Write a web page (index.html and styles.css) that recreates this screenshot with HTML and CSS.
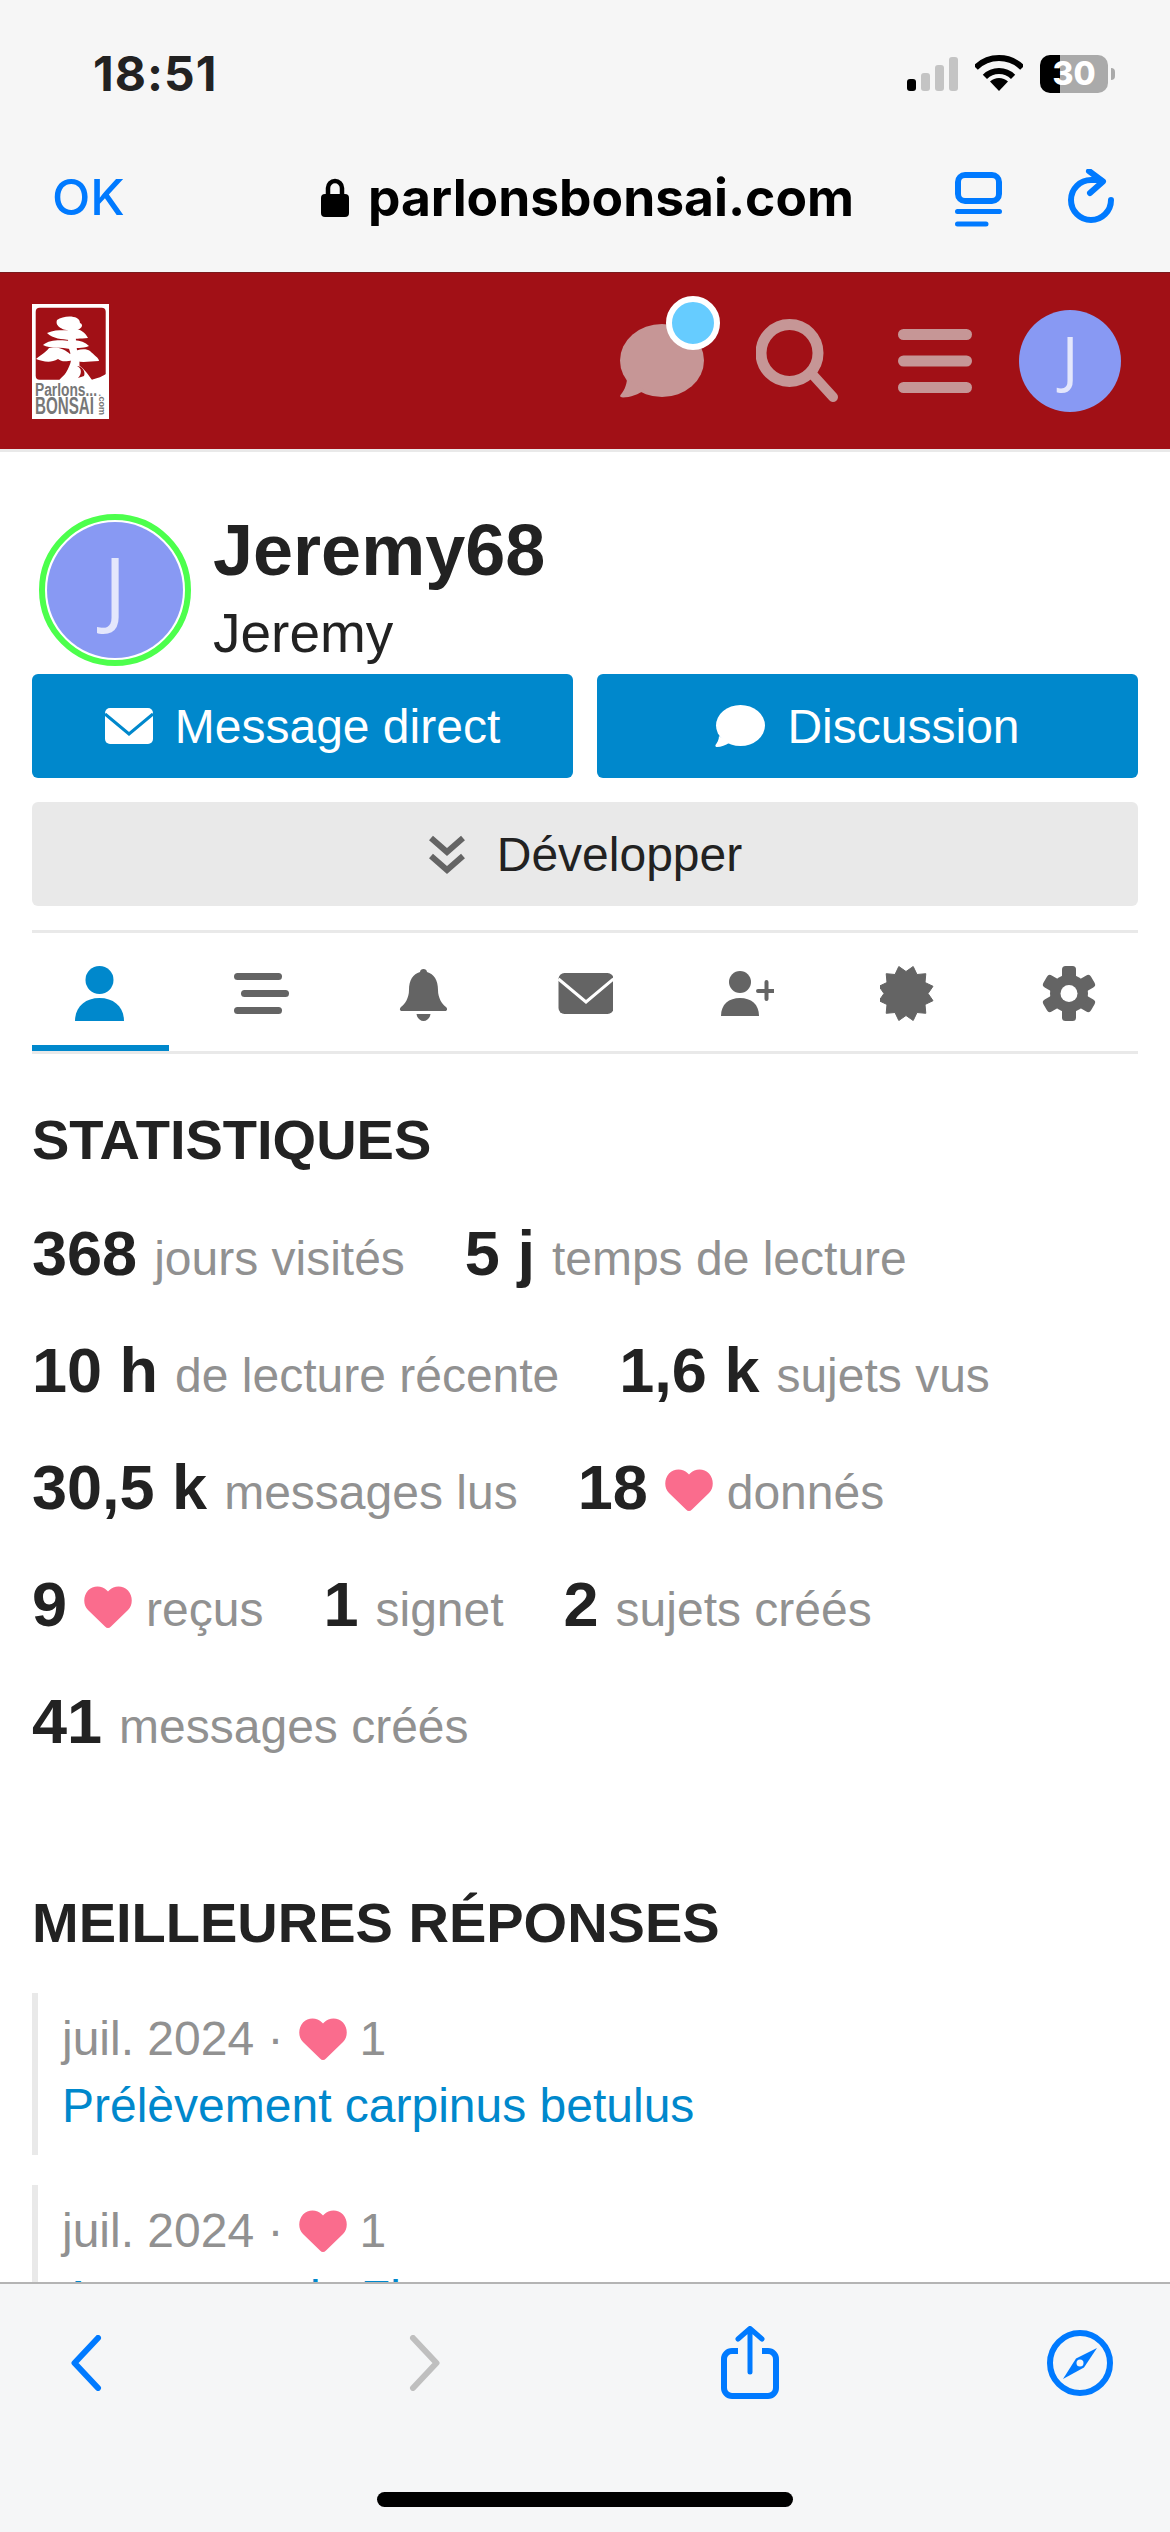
FILE: index.html
```html
<!DOCTYPE html>
<html lang="fr">
<head>
<meta charset="utf-8">
<title>Jeremy68 - parlonsbonsai.com</title>
<link rel="stylesheet" href="styles.css">
</head>
<body>
<div class="phone">

<!-- barre iOS + safari -->
<div class="browser-top">
	<div class="status-bar">
		<span class="clock">18:51</span>
		<div class="status-icons">
			<svg class="signal" width="51" height="34" viewBox="0 0 51 34">
				<rect x="0" y="22" width="9" height="12" rx="3" fill="#000"/>
				<rect x="14" y="16" width="9" height="18" rx="3" fill="#c4c4c4"/>
				<rect x="28" y="8" width="9" height="26" rx="3" fill="#c4c4c4"/>
				<rect x="42" y="0" width="9" height="34" rx="3" fill="#c4c4c4"/>
			</svg>
			<svg class="wifi" width="48" height="36" viewBox="0 0 48 36">
				<path d="M.7 12.7A33 33 0 0 1 47.3 12.7" fill="none" stroke="#000" stroke-width="6"/>
				<path d="M9.9 21.9A20 20 0 0 1 38.1 21.9" fill="none" stroke="#000" stroke-width="6"/>
				<path d="M24 36L15 26.500A13 13 0 0 1 33 26.500Z" fill="#000"/>
			</svg>
			<div class="battery">30</div>
			<div class="battery-cap"></div>
		</div>
	</div>
	<div class="address-bar">
		<span class="ok-link">OK</span>
		<div class="url">
			<svg class="lock" width="28" height="39" viewBox="0 0 28 39">
				<path d="M7 18V10a7 7 0 0 1 14 0v8" fill="none" stroke="#000" stroke-width="4.500"/>
				<rect x="0" y="16" width="28" height="23" rx="4" fill="#000"/>
			</svg>
			<span>parlonsbonsai.com</span>
		</div>
		<svg class="tabs-icon" width="47" height="55" viewBox="0 0 47 55">
			<rect x="3" y="3" width="41" height="26" rx="7" fill="none" stroke="#007aff" stroke-width="6"/>
			<path d="M2.500 39.500H44.500M2.500 52H31" fill="none" stroke="#007aff" stroke-width="5" stroke-linecap="round"/>
		</svg>
		<svg class="reload-icon" width="48" height="56" viewBox="0 0 48 56">
			<path d="M45 31A20 20 0 1 1 25 11H34" fill="none" stroke="#007aff" stroke-width="6" stroke-linecap="round"/>
			<path d="M23 2L37 12.500L24 24" fill="none" stroke="#007aff" stroke-width="6" stroke-linecap="round" stroke-linejoin="round"/>
		</svg>
	</div>
</div>

<!-- entete du site -->
<header class="site-header">
	<svg class="logo" width="77" height="115" viewBox="0 0 77 115">
		<rect width="77" height="115" fill="#fff"/>
		<rect x="3.700" y="3.700" width="70" height="72" rx="4" fill="#a11016"/>
		<path d="M24 80C30 72 38 66 44 60C50 62 56 70 60 76C64 74 68 74 74 70V84H24Z" fill="#fff"/>
		<path d="M25 16C32 11 48 11 48 19C53 21 48 27 42 26C36 28 22 24 25 16Z" fill="#fff"/>
		<path d="M15 29C24 25 32 27 38 26C46 23 53 28 56 34C48 35 42 34 38 36C30 35 21 35 15 29Z" fill="#fff"/>
		<path d="M11 41C18 35 30 36 38 37C44 35 52 37 57 42C50 45 44 43 38 45C30 43 18 45 11 41Z" fill="#fff"/>
		<path d="M4 55C10 50 14 48 17 44C26 42 34 46 38 50C44 45 54 44 58 47C62 51 67 54 67 57C58 57 52 59 44 57C38 55 32 60 26 55C18 60 10 57 4 55Z" fill="#fff"/>
		<path d="M34 14C38 26 34 38 38 48C41 56 38 62 32 72L44 74C50 62 47 54 45 46C43 36 44 26 44 16Z" fill="#fff"/>
		<path d="M45 62C50 64 50 70 46 74L52 72C54 68 50 62 45 62Z" fill="#a11016"/>
		<text class="logo-parlons" x="3" y="92" textLength="62" lengthAdjust="spacingAndGlyphs">Parlons...</text>
		<text class="logo-bonsai" x="3" y="110" textLength="59" lengthAdjust="spacingAndGlyphs">BONSAI</text>
		<text class="logo-com" transform="translate(67 90) rotate(90)" textLength="21" lengthAdjust="spacingAndGlyphs">.com</text>
	</svg>
	<div class="header-icons">
		<div class="chat-icon">
			<svg width="84" height="74" viewBox="0 0 84 74">
				<ellipse cx="42" cy="36.500" rx="42" ry="36.500" fill="#c69696"/>
				<path d="M7 54C7 62 3 68 .5 71C-.5 73 1 73.500 3 73.500C10 73.500 19 70 25 66Z" fill="#c69696"/>
			</svg>
			<span class="chat-badge"></span>
		</div>
		<svg class="search-icon" width="84" height="84" viewBox="0 0 84 84">
			<circle cx="33.500" cy="34" r="28.500" fill="none" stroke="#c69696" stroke-width="11"/>
			<path d="M57 56L77 78" fill="none" stroke="#c69696" stroke-width="10" stroke-linecap="round"/>
		</svg>
		<svg class="menu-icon" width="74" height="64" viewBox="0 0 74 64">
			<rect y="0" width="74" height="11" rx="5.500" fill="#c69696"/>
			<rect y="26.500" width="74" height="11" rx="5.500" fill="#c69696"/>
			<rect y="53" width="74" height="11" rx="5.500" fill="#c69696"/>
		</svg>
		<div class="avatar avatar-small">J</div>
	</div>
</header>

<main class="content">

	<div class="user-card">
		<div class="avatar-ring"><div class="avatar avatar-big">J</div></div>
		<div class="user-names">
			<h1 class="username">Jeremy68</h1>
			<div class="fullname">Jeremy</div>
		</div>
	</div>

	<div class="user-buttons">
		<button class="btn btn-primary">
			<svg width="48" height="36" viewBox="0 0 48 36">
				<rect width="48" height="36" rx="5" fill="#fff"/>
				<path d="M0 6L24 26L48 6" fill="none" stroke="#0088cc" stroke-width="3"/>
			</svg>
			Message direct
		</button>
		<button class="btn btn-primary">
			<svg class="btn-bubble" width="50" height="42" viewBox="0 0 50 42">
				<ellipse cx="25.500" cy="20.500" rx="24.500" ry="20.500" fill="#fff"/>
				<path d="M4 31C4 35 2 38 .5 40C0 41.500 1 42 2 42C6 42 11 40 14 38Z" fill="#fff"/>
			</svg>
			Discussion
		</button>
	</div>
	<button class="btn btn-expand">
		<svg width="38" height="39" viewBox="0 0 38 39">
			<path d="M3 3L19 17L35 3M3 21L19 35L35 21" fill="none" stroke="#646464" stroke-width="6"/>
		</svg>
		Développer
	</button>

	<nav class="user-tabs">
		<a class="tab active">
			<svg width="56" height="55" viewBox="0 0 56 55">
				<circle cx="26.500" cy="14" r="14" fill="#0088cc"/>
				<path d="M2 55C2 41 12 32 26.500 32C41 32 51 41 51 55Z" fill="#0088cc"/>
			</svg>
		</a>
		<a class="tab">
			<svg width="56" height="55" viewBox="0 0 56 55">
				<rect x="0" y="7" width="48" height="7" rx="3.500" fill="#646464"/>
				<rect x="7" y="24" width="48" height="7" rx="3.500" fill="#646464"/>
				<rect x="0" y="41" width="48" height="7" rx="3.500" fill="#646464"/>
			</svg>
		</a>
		<a class="tab">
			<svg width="56" height="55" viewBox="0 0 56 55">
				<path d="M24 6C24 2 31 2 31 6C38 8 42 14 42 24C42 32 46 38 50 41C52 43 51 45 49 45H6C4 45 3 43 5 41C9 38 13 32 13 24C13 14 17 8 24 6Z" fill="#646464"/>
				<path d="M20.500 48H34.500C34 52 31 55 27.500 55C24 55 21 52 20.500 48Z" fill="#646464"/>
			</svg>
		</a>
		<a class="tab">
			<svg width="56" height="55" viewBox="-1.500 0 56 55">
				<rect x="0" y="7" width="55" height="41" rx="6" fill="#646464"/>
				<path d="M0 13L27.500 36L55 13" fill="none" stroke="#fff" stroke-width="3"/>
			</svg>
		</a>
		<a class="tab">
			<svg width="56" height="55" viewBox="-3 0 56 55">
				<circle cx="19" cy="16" r="11" fill="#646464"/>
				<path d="M0 50C0 38 8 32 19 32C30 32 38 38 38 50Z" fill="#646464"/>
				<path d="M37 25H54M45.500 16V33" fill="none" stroke="#646464" stroke-width="4" stroke-linecap="round"/>
			</svg>
		</a>
		<a class="tab">
			<svg width="56" height="55" viewBox="-26 -27.500 56 55">
				<path d="M0 -22L7.200 -27L11 -19L19.800 -19.800L19 -11L27 -7.200L22 0L27 7.200L19 11L19.800 19.800L11 19L7.200 27L0 22L-7.200 27L-11 19L-19.800 19.800L-19 11L-27 7.200L-22 0L-27 -7.200L-19 -11L-19.800 -19.800L-11 -19L-7.200 -27Z" fill="#646464" stroke="#646464" stroke-linejoin="round"/>
			</svg>
		</a>
		<a class="tab">
			<svg width="56" height="55" viewBox="-28 -27.500 56 55">
				<rect x="-7" y="-27.500" width="14" height="55" rx="3.500" fill="#646464"/>
				<rect x="-7" y="-27.500" width="14" height="55" rx="3.500" fill="#646464" transform="rotate(60)"/>
				<rect x="-7" y="-27.500" width="14" height="55" rx="3.500" fill="#646464" transform="rotate(120)"/>
				<circle r="19" fill="#646464"/>
				<circle r="8.500" fill="#fff"/>
			</svg>
		</a>
	</nav>

	<h2 class="section-title stats-title">STATISTIQUES</h2>
	<ul class="stats">
		<li class="stat"><b>368</b><span>jours visités</span></li>
		<li class="stat"><b>5 j</b><span>temps de lecture</span></li>
		<li class="stat"><b>10 h</b><span>de lecture récente</span></li>
		<li class="stat"><b>1,6 k</b><span>sujets vus</span></li>
		<li class="stat"><b>30,5 k</b><span>messages lus</span></li>
		<li class="stat"><b>18</b><svg class="heart stat-heart" viewBox="0 0 48 42"><use href="#heart"/></svg><span>donnés</span></li>
		<li class="stat"><b>9</b><svg class="heart stat-heart" viewBox="0 0 48 42"><use href="#heart"/></svg><span>reçus</span></li>
		<li class="stat"><b>1</b><span>signet</span></li>
		<li class="stat"><b>2</b><span>sujets créés</span></li>
		<li class="stat"><b>41</b><span>messages créés</span></li>
	</ul>

	<h2 class="section-title best-title">MEILLEURES RÉPONSES</h2>
	<div class="reply">
		<div class="reply-meta">juil. 2024 ·<svg class="heart" viewBox="0 0 48 42"><use href="#heart"/></svg>1</div>
		<a class="reply-link">Prélèvement carpinus betulus</a>
	</div>
	<div class="reply">
		<div class="reply-meta">juil. 2024 ·<svg class="heart" viewBox="0 0 48 42"><use href="#heart"/></svg>1</div>
		<a class="reply-link">Arrosages de Ficus</a>
	</div>
</main>

<!-- barre du bas safari -->
<footer class="browser-bottom">
	<div class="nav-row">
		<svg class="nav-back" width="31" height="56" viewBox="0 0 31 56">
			<path d="M27 3L3.500 28L27 53" fill="none" stroke="#007aff" stroke-width="6" stroke-linecap="round" stroke-linejoin="round"/>
		</svg>
		<svg class="nav-forward" width="31" height="56" viewBox="0 0 31 56">
			<path d="M4 3L27.500 28L4 53" fill="none" stroke="#bfbfbf" stroke-width="6" stroke-linecap="round" stroke-linejoin="round"/>
		</svg>
		<svg class="nav-share" width="58" height="73" viewBox="0 0 58 73">
			<path d="M17 25H11A8 8 0 0 0 3 33V62A8 8 0 0 0 11 70H47A8 8 0 0 0 55 62V33A8 8 0 0 0 47 25H41" fill="none" stroke="#007aff" stroke-width="6"/>
			<path d="M29 3V46M17 13L29 2.500L41 13" fill="none" stroke="#007aff" stroke-width="5" stroke-linecap="round" stroke-linejoin="round"/>
		</svg>
		<svg class="nav-compass" width="66" height="66" viewBox="0 0 66 66">
			<circle cx="33" cy="33" r="30" fill="none" stroke="#007aff" stroke-width="6"/>
			<path d="M50 18L37 37.400L16 49L29 28.600Z" fill="#007aff"/>
			<circle cx="33" cy="33" r="3.500" fill="#f5f6f7"/>
		</svg>
	</div>
	<div class="home-bar"></div>
</footer>

</div>

<svg class="defs" width="0" height="0">
	<symbol id="heart" viewBox="0 0 48 42">
		<path d="M24 42C23 42 22 41.500 21 40.500L4 24C-1 19 -1 10 4 4.500C9 -1 18 -1 23 4.500L24 5.500L25 4.500C30 -1 39 -1 44 4.500C49 10 49 19 44 24L27 40.500C26 41.500 25 42 24 42Z" fill="#fa6c8d"/>
	</symbol>
</svg>
</body>
</html>
```

FILE: styles.css
```css
* {
	box-sizing: border-box;
}

html, body {
	margin: 0;
	padding: 0;
	background: #fff;
}

body {
	font-family: "Liberation Sans", Arial, sans-serif;
	color: #222;
}

.phone {
	width: 1170px;
	height: 2532px;
	display: flex;
	flex-direction: column;
	overflow: hidden;
}

.defs {
	display: block;
}

svg {
	display: block;
	flex: none;
}

/* haut navigateur */
.browser-top {
	height: 273px;
	background: #f6f6f6;
	border-bottom: 1px solid #7a1a1d;
}

.status-bar {
	height: 142px;
	padding: 47px 55px 0 93px;
	display: flex;
	justify-content: space-between;
}

.clock {
	font-family: Inter, sans-serif;
	font-weight: 700;
	font-size: 48px;
	letter-spacing: 1px;
	line-height: 54px;
}

.status-icons {
	display: flex;
	align-items: flex-start;
	padding-top: 8px;
}

.signal {
	margin-top: 2px;
}

.wifi {
	margin-left: 17px;
}

.battery {
	width: 68px;
	height: 38px;
	margin-left: 17px;
	border-radius: 10px;
	background: linear-gradient(to right, #000 20px, #aaa 20px);
	color: #fff;
	font-family: Inter, sans-serif;
	font-weight: 800;
	font-size: 32px;
	line-height: 38px;
	text-align: center;
}

.battery-cap {
	width: 4px;
	height: 12px;
	margin: 13px 0 0 3px;
	background: #aaa;
	border-radius: 0 4px 4px 0;
}

.address-bar {
	display: flex;
	align-items: center;
	padding: 0 0 0 52px;
	height: 110px;
}

.ok-link {
	font-family: Inter, sans-serif;
	font-weight: 500;
	font-size: 50px;
	color: #007aff;
	width: 269px;
}

.url {
	display: flex;
	align-items: center;
	gap: 19px;
	font-family: Inter, sans-serif;
	font-weight: 700;
	font-size: 51.5px;
	color: #000;
	width: 634px;
}

.tabs-icon {
	margin-top: 4px;
}

.reload-icon {
	margin-left: 64px;
}

/* entete rouge */
.site-header {
	height: 176px;
	background: #a11016;
	padding: 0 49px 0 32px;
	display: flex;
	align-items: center;
	justify-content: space-between;
}

.logo-parlons {
	font-size: 18px;
	font-weight: bold;
	fill: #777;
}

.logo-bonsai {
	font-size: 23px;
	font-weight: bold;
	fill: #777;
}

.logo-com {
	font-size: 9px;
	font-weight: bold;
	fill: #777;
}

.header-icons {
	display: flex;
	align-items: center;
}

.chat-icon {
	position: relative;
}

.chat-badge {
	position: absolute;
	top: -28px;
	left: 46px;
	width: 54px;
	height: 54px;
	border-radius: 50%;
	background: #6cf;
	border: 6px solid #fff;
}

.search-icon {
	margin-left: 52px;
}

.menu-icon {
	margin-left: 58px;
}

.avatar {
	border-radius: 50%;
	background: #8899f3;
	color: #e4e7fc;
	font-family: "Open Sans", sans-serif;
	text-align: center;
}

.avatar-small {
	width: 102px;
	height: 102px;
	margin-left: 47px;
	font-size: 62px;
	line-height: 96px;
}

/* contenu */
.content {
	flex: 1;
	min-height: 0;
	overflow: hidden;
	padding: 0 32px;
	border-top: 3px solid #e9e9e9;
}

.user-card {
	display: flex;
	padding: 62px 0 0 7px;
	height: 222px;
}

.avatar-ring {
	width: 152px;
	height: 152px;
	padding: 2px;
	border-radius: 50%;
	border: 6px solid #4cff4c;
	flex: none;
}

.avatar-big {
	width: 136px;
	height: 136px;
	font-size: 84px;
	line-height: 128px;
}

.user-names {
	margin-left: 22px;
}

.username {
	margin: 0;
	font-size: 72px;
	line-height: 72px;
	font-weight: bold;
}

.fullname {
	margin-top: 17px;
	font-size: 55px;
	line-height: 60px;
}

.user-buttons {
	display: flex;
	gap: 24px;
}

.btn {
	width: 100%;
	height: 104px;
	border: 0;
	border-radius: 6px;
	font-family: "Liberation Sans", Arial, sans-serif;
	font-size: 48px;
	display: flex;
	align-items: center;
	justify-content: center;
	gap: 22px;
}

.btn-primary {
	background: #0088cc;
	color: #fff;
}

.btn-expand {
	margin-top: 24px;
	background: #e9e9e9;
	color: #222;
	gap: 31px;
}

.user-tabs {
	margin-top: 24px;
	display: flex;
	gap: 24px;
	border-top: 3px solid #e9e9e9;
	border-bottom: 3px solid #e9e9e9;
}

.tab {
	flex: 1;
	padding: 33px 0 24px;
	border-bottom: 6px solid transparent;
	display: flex;
	justify-content: center;
}

.tab.active {
	border-bottom-color: #0088cc;
}

.section-title {
	margin: 0;
	font-size: 56px;
	line-height: 64px;
	font-weight: bold;
}

.stats-title {
	margin-top: 54px;
}

.stats {
	list-style: none;
	margin: 41px 0 0;
	padding: 0;
	display: flex;
	flex-wrap: wrap;
	column-gap: 60px;
	row-gap: 37px;
}

.stat {
	display: flex;
	align-items: baseline;
	gap: 17px;
	height: 80px;
	font-size: 48px;
	line-height: 80px;
	color: #919191;
}

.stat b {
	font-size: 63px;
	color: #222;
}

.heart {
	width: 48px;
	height: 42px;
}

.stat-heart {
	align-self: center;
	margin: 6px -3px 0 0;
}

.best-title {
	margin-top: 130px;
}

.reply {
	margin-top: 30px;
	height: 162px;
	padding: 14px 0 0 24px;
	border-left: 6px solid #e9e9e9;
}

.best-title + .reply {
	margin-top: 38px;
}

.reply-meta {
	display: flex;
	align-items: center;
	font-size: 48px;
	line-height: 64px;
	color: #919191;
	white-space: pre;
}

.reply-meta .heart {
	margin: 0 12px 0 16px;
}

.reply-link {
	display: block;
	margin-top: 3px;
	font-size: 48px;
	line-height: 64px;
	color: #0088cc;
}

/* bas navigateur */
.browser-bottom {
	flex: none;
	height: 250px;
	background: #f5f6f7;
	border-top: 2px solid #b4b4b4;
}

.nav-row {
	display: flex;
	align-items: center;
	padding: 42px 0 0 71px;
}

.nav-forward {
	margin-left: 307px;
}

.nav-share {
	margin-left: 281px;
}

.nav-compass {
	margin-left: 268px;
}

.home-bar {
	width: 416px;
	height: 15px;
	margin: 93px auto 0;
	border-radius: 8px;
	background: #000;
}
```
